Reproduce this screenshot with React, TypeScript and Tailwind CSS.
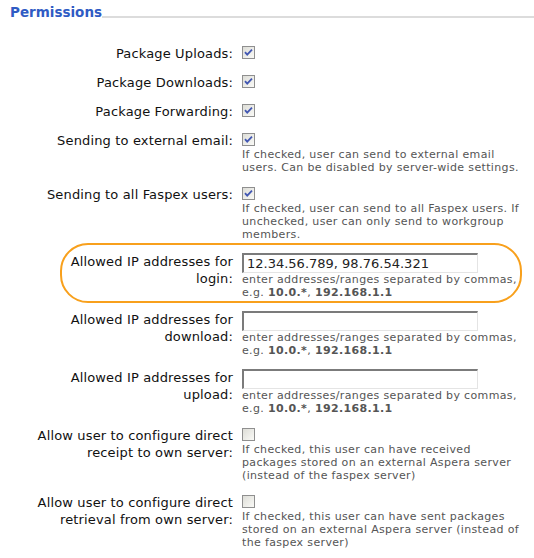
import type { ReactNode } from 'react';

function Checkbox({ checked }: { checked?: boolean }) {
  return (
    <svg width="13" height="13" viewBox="0 0 13 13" className="block">
      <defs>
        <linearGradient id="cbfill" x1="0" y1="0" x2="1" y2="1">
          <stop offset="0" stopColor="#dcdcd6" />
          <stop offset="1" stopColor="#fbfbf8" />
        </linearGradient>
      </defs>
      <rect x="0.5" y="0.5" width="12" height="12" fill="url(#cbfill)" stroke="#8f8f8f" />
      {checked && (
        <path d="M3 6.2 L5.2 8.6 L10 3.6" fill="none" stroke="#4257b2" strokeWidth="1.8" />
      )}
    </svg>
  );
}

function Help({ children }: { children: ReactNode }) {
  return <div className="text-[11px] leading-[13px] tracking-[0.35px] text-[#555]">{children}</div>;
}

function IpHelp() {
  return (
    <Help>
      enter addresses/ranges separated by commas,
      <br />
      e.g. <b>10.0.*</b>, <b>192.168.1.1</b>
    </Help>
  );
}

function IpInput({ value }: { value?: string }) {
  return (
    <input
      type="text"
      defaultValue={value}
      className="block h-[20px] w-[236px] border-t-2 border-l-2 border-r border-b border-t-[#7b7b7b] border-l-[#7b7b7b] border-r-[#e4e4e4] border-b-[#e4e4e4] bg-white px-[3px] text-[13px] leading-[16px] text-[#222] outline-none"
    />
  );
}

function Row({
  label,
  children,
  highlight,
}: {
  label: ReactNode
  children: ReactNode
  highlight?: boolean
}) {
  return (
    <div className="relative grid grid-cols-[233px_1fr] gap-x-[9px] py-[6px] pr-[12px]">
      <div className="text-right text-[13px] leading-[17px] tracking-[0.15px] text-[#111]">{label}</div>
      <div>{children}</div>
      {highlight && (
        <span className="pointer-events-none absolute left-[60px] right-[12px] top-[-4px] bottom-[2px] rounded-[28px] border-2 border-[#f8a01c]" />
      )}
    </div>
  );
}

function CheckLine({ checked }: { checked?: boolean }) {
  return (
    <div className="flex h-[16px] items-start pt-[1px]">
      <Checkbox checked={checked} />
    </div>
  );
}

export default function App() {
  return (
    <div className="h-[558px] w-[534px] overflow-hidden bg-white font-['DejaVu_Sans',Verdana,sans-serif]">
      <div className="flex items-end pl-[10px] pt-[4px]">
        <h2 className="text-[13.5px] font-bold leading-[17px] text-[#2f5bc4]">Permissions</h2>
        <div className="mb-[3px] flex-1 border-b-2 border-[#dcdcdc]" />
      </div>

      <div className="mt-[18px]">
        <Row label="Package Uploads:">
          <CheckLine checked />
        </Row>
        <Row label="Package Downloads:">
          <CheckLine checked />
        </Row>
        <Row label="Package Forwarding:">
          <CheckLine checked />
        </Row>
        <Row label="Sending to external email:">
          <CheckLine checked />
          <Help>
            If checked, user can send to external email
            <br />
            users. Can be disabled by server-wide settings.
          </Help>
        </Row>
        <Row label="Sending to all Faspex users:">
          <CheckLine checked />
          <Help>
            If checked, user can send to all Faspex users. If
            <br />
            unchecked, user can only send to workgroup
            <br />
            members.
          </Help>
        </Row>
        <Row
          highlight
          label={
            <>
              Allowed IP addresses for
              <br />
              login:
            </>
          }
        >
          <IpInput value="12.34.56.789, 98.76.54.321" />
          <IpHelp />
        </Row>
        <Row
          label={
            <>
              Allowed IP addresses for
              <br />
              download:
            </>
          }
        >
          <IpInput />
          <IpHelp />
        </Row>
        <Row
          label={
            <>
              Allowed IP addresses for
              <br />
              upload:
            </>
          }
        >
          <IpInput />
          <IpHelp />
        </Row>
        <Row
          label={
            <>
              Allow user to configure direct
              <br />
              receipt to own server:
            </>
          }
        >
          <CheckLine />
          <Help>
            If checked, this user can have received
            <br />
            packages stored on an external Aspera server
            <br />
            (instead of the faspex server)
          </Help>
        </Row>
        <Row
          label={
            <>
              Allow user to configure direct
              <br />
              retrieval from own server:
            </>
          }
        >
          <CheckLine />
          <Help>
            If checked, this user can have sent packages
            <br />
            stored on an external Aspera server (instead of
            <br />
            the faspex server)
          </Help>
        </Row>
      </div>
    </div>
  );
}
